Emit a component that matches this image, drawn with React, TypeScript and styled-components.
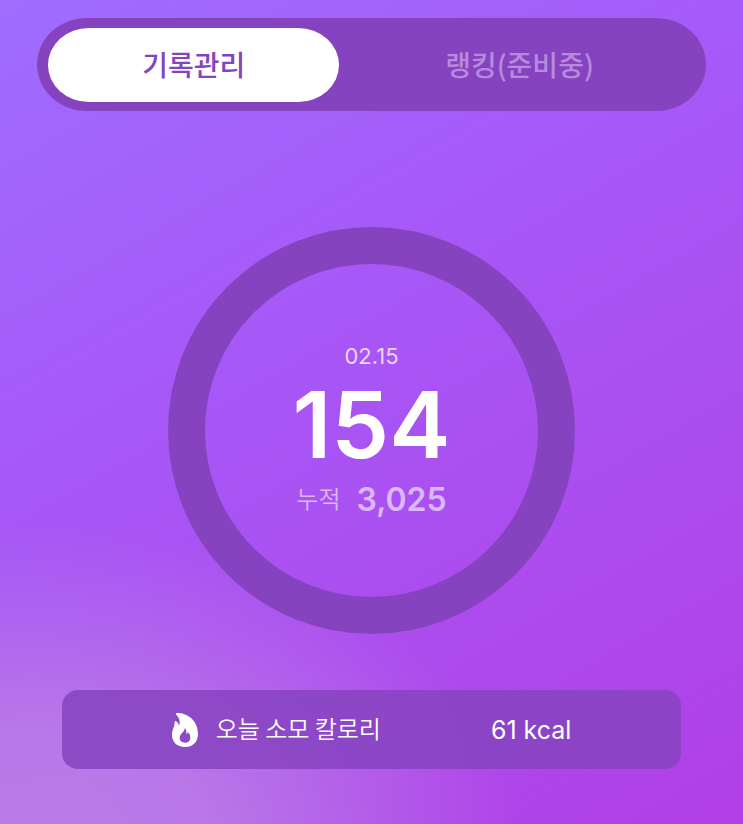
import React, { useState } from "react";
import styled, { createGlobalStyle } from "styled-components";

const GlobalStyle = createGlobalStyle`
  *, *::before, *::after { box-sizing: border-box; }
  body {
    margin: 0;
    font-family: Inter, "Noto Sans CJK KR", sans-serif;
    -webkit-font-smoothing: antialiased;
  }
`;

const Page = styled.main`
  min-height: 100vh;
  display: flex;
  flex-direction: column;
  align-items: center;
  padding: 18px 5% 55px;
  color: #fff;
  background:
    radial-gradient(ellipse 64% 38% at 6% 102%, rgba(188, 130, 230, 0.88) 0%, rgba(188, 130, 230, 0.8) 35%, rgba(188, 130, 230, 0.36) 70%, rgba(188, 130, 230, 0) 100%),
    linear-gradient(150deg, #9f6dff 0%, #a757f6 42%, #ad4aec 75%, #b13fe6 100%);
`;

const Tabs = styled.div`
  align-self: stretch;
  display: flex;
  gap: 5px;
  padding: 10px 11px 9px;
  border-radius: 50px / 50%;
  background: #8643c0;
`;

const Tab = styled.button<{ $active: boolean }>`
  flex: ${(p) => (p.$active ? "0 0 45%" : "1")};
  height: 74px;
  padding: 0 0 2px;
  border: 0;
  border-radius: 41px / 50%;
  background: ${(p) => (p.$active ? "#fff" : "transparent")};
  color: ${(p) => (p.$active ? "#8643c0" : "#b78ade")};
  font: 500 28px/40px "Noto Sans CJK KR", sans-serif;
`;

const Ring = styled.section`
  width: 407px;
  max-width: 100%;
  aspect-ratio: 1;
  margin-top: 116px;
  border: 37px solid #8643c0;
  border-radius: 50%;
  display: flex;
  flex-direction: column;
  align-items: center;
  justify-content: center;
`;

const DateText = styled.time`
  font-size: 22px;
  line-height: 28px;
  color: #ead5fd;
`;

const Count = styled.strong`
  font-size: 92px;
  font-weight: 600;
  line-height: 110px;
`;

const Total = styled.div`
  display: flex;
  align-items: center;
  gap: 16px;
  color: #dcb8fa;
`;

const TotalLabel = styled.span`
  padding-bottom: 4px;
  font: 350 24px/36px "Noto Sans CJK KR", sans-serif;
`;

const TotalValue = styled.span`
  font-size: 32px;
  font-weight: 600;
  line-height: 40px;
`;

const Calories = styled.section`
  align-self: stretch;
  margin: 56px 25px 0;
  height: 79px;
  border-radius: 16px;
  display: flex;
  align-items: center;
  justify-content: center;
  gap: 110px;
  background: rgba(134, 67, 192, 0.86);
`;

const CaloriesLabel = styled.span`
  display: flex;
  align-items: center;
  gap: 18px;
  font: 350 24px/36px "Noto Sans CJK KR", sans-serif;
`;

const LabelText = styled.span`
  padding-bottom: 4px;
`;

const CaloriesValue = styled.span`
  font-size: 25px;
  line-height: 36px;
`;

const FlameIcon = () => (
  <svg width="26" height="34" viewBox="0 0 78 102" fill="#fff" fillRule="evenodd" aria-hidden="true">
    <path d="M15 0C48 0 78 24 78 62C78 87 62 102 39 102C15 102 0 87 0 66C0 49 8 42 8 27C8 23 11 23 14 26C18 29 20 33 21 38C26 27 22 14 13 5C10 2 12 0 15 0ZM38 45C39 57 23 61 23 75C23 84 30 89 39 89C48 89 55 83 55 74C55 67 52 61 47 57C47 61 45 63 43 64C44 56 43 49 38 45Z" />
  </svg>
);

const tabs = ["기록관리", "랭킹(준비중)"];

export default function App() {
  const [active, setActive] = useState(0);
  return (
    <>
      <GlobalStyle />
      <Page>
        <Tabs role="tablist">
          {tabs.map((label, i) => (
            <Tab key={label} type="button" role="tab" aria-selected={i === active} $active={i === active} onClick={() => setActive(i)}>
              {label}
            </Tab>
          ))}
        </Tabs>
        <Ring>
          <DateText>02.15</DateText>
          <Count>154</Count>
          <Total>
            <TotalLabel>누적</TotalLabel>
            <TotalValue>3,025</TotalValue>
          </Total>
        </Ring>
        <Calories>
          <CaloriesLabel>
            <FlameIcon />
            <LabelText>오늘 소모 칼로리</LabelText>
          </CaloriesLabel>
          <CaloriesValue>61 kcal</CaloriesValue>
        </Calories>
      </Page>
    </>
  );
}
